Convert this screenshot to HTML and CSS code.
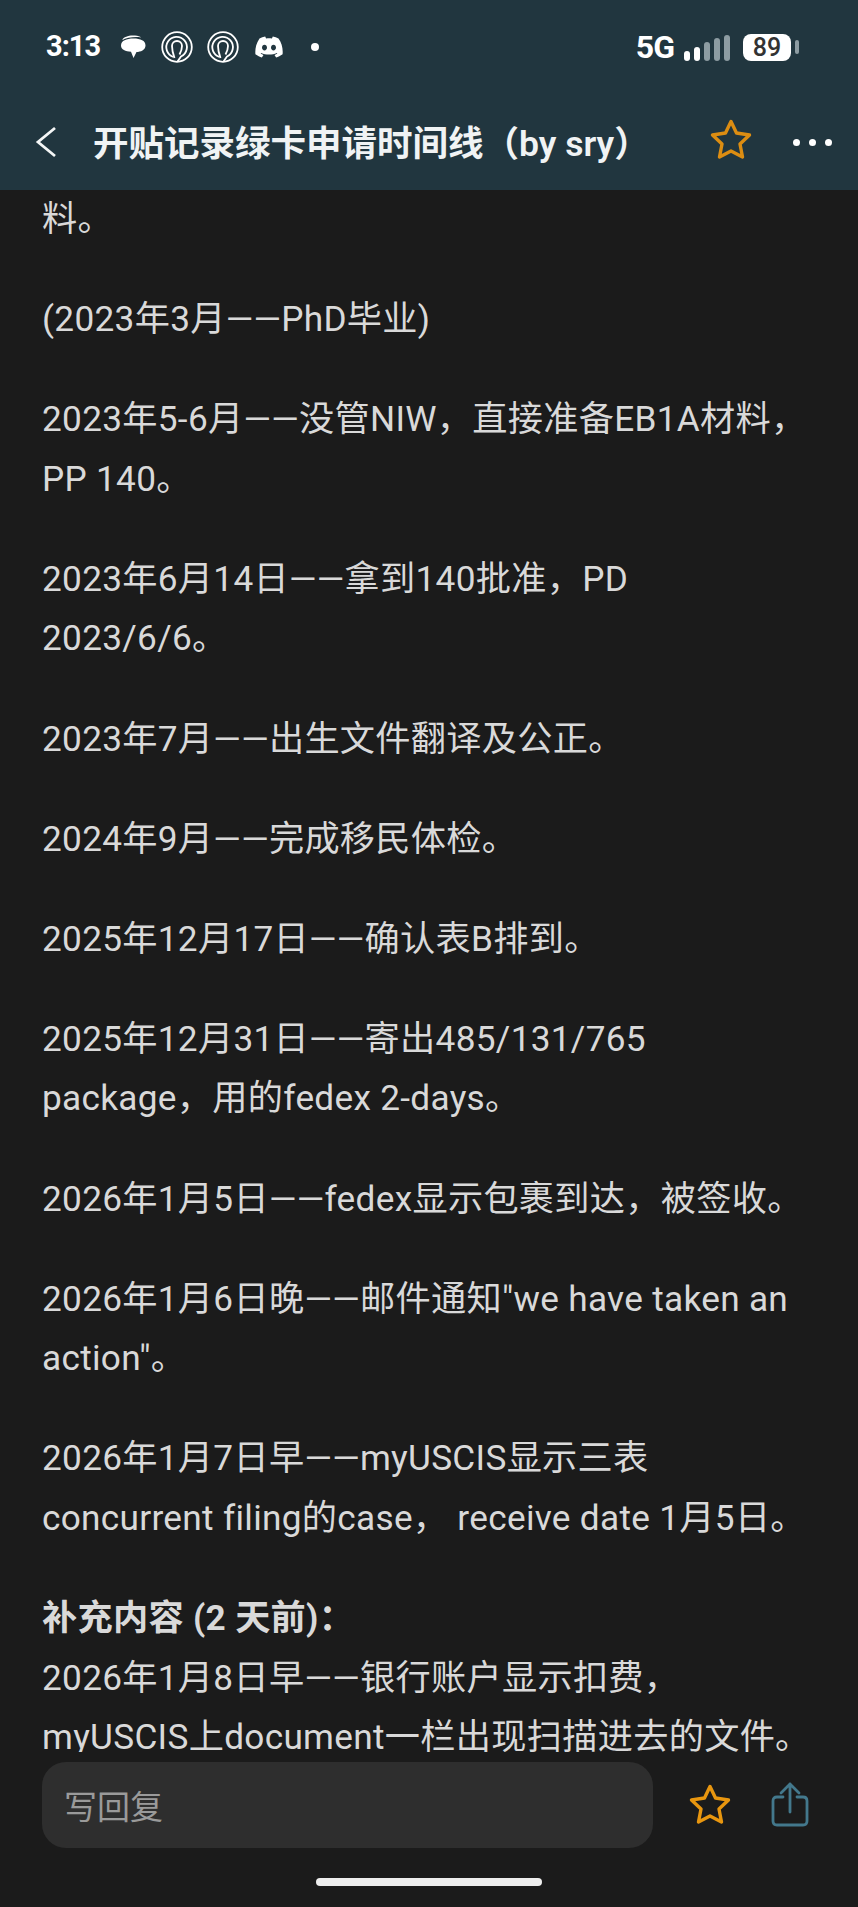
FILE: index.html
```html
<!DOCTYPE html>
<html lang="zh-CN">
<head>
  <meta charset="UTF-8" />
  <meta name="viewport" content="width=device-width, initial-scale=1.0" />
  <title>开贴记录绿卡申请时间线</title>
  <link rel="stylesheet" href="styles.css">
</head>
<body>
  <div class="screen">
    <header class="topbar">
      <div class="status-bar">
        <div class="status-left">
          <span class="clock">3:13</span>
          <svg class="note-bubble" width="26" height="26" viewBox="0 0 26 26">
            <path d="M2 6 C4 2.500 9 1 15 1.500 C18 1.700 20 2.500 21 3.500 C15 2.500 7 3.500 2 6Z" fill="#fff"/>
            <path d="M1 11.500 C1 6.500 6.500 4.500 13.500 4.500 C20.500 4.500 25.500 6.500 25.500 11.500 C25.500 16 20.500 18 16.500 18 L13.500 24 L11 17.800 C5.500 17.500 1 15.500 1 11.500Z" fill="#fff"/>
          </svg>
          <svg class="note-ring" width="32" height="32" viewBox="0 0 32 32" fill="none" stroke="#fff" stroke-width="1.800">
            <circle cx="16" cy="16" r="14.800"/>
            <path d="M12.500 26 A10.300 10.300 0 1 1 20 25.500 L16.500 30.500"/>
            <path d="M13.500 27 Q11 20 11 15 A5 5 0 0 1 21 15 Q21 19 18.500 23.500"/>
          </svg>
          <svg class="note-ring" width="32" height="32" viewBox="0 0 32 32" fill="none" stroke="#fff" stroke-width="1.800">
            <circle cx="16" cy="16" r="14.800"/>
            <path d="M12.500 26 A10.300 10.300 0 1 1 20 25.500 L16.500 30.500"/>
            <path d="M13.500 27 Q11 20 11 15 A5 5 0 0 1 21 15 Q21 19 18.500 23.500"/>
          </svg>
          <svg class="note-discord" width="28" height="22" viewBox="0 0 28 22">
            <path fill="#fff" fill-rule="evenodd" d="M23.500 2.500 C21.700 1.600 19.800 1 17.800 0.600 L16.900 2.400 C14.900 2.100 13 2.100 11.100 2.400 L10.200 0.600 C8.200 1 6.300 1.600 4.500 2.500 C0.900 7.900 0 13.100 0.400 18.300 C2.600 19.900 4.800 20.900 6.900 21.500 L8.500 19 C7.400 18.600 6.500 18.100 5.600 17.500 L6.200 17 C10.500 19 17.500 19 21.800 17 L22.400 17.500 C21.500 18.100 20.600 18.600 19.500 19 L21.100 21.500 C23.200 20.900 25.400 19.900 27.600 18.300 C28.100 12.300 26.800 7.100 23.500 2.500Z M9.500 14.500 C8.100 14.500 7 13.200 7 11.600 C7 10 8.100 8.700 9.500 8.700 C10.900 8.700 12 10 12 11.600 C12 13.200 10.900 14.500 9.500 14.500Z M18.500 14.500 C17.100 14.500 16 13.200 16 11.600 C16 10 17.100 8.700 18.500 8.700 C19.900 8.700 21 10 21 11.600 C21 13.200 19.900 14.500 18.500 14.500Z"/>
          </svg>
          <span class="dot"></span>
        </div>
        <div class="status-right">
          <span class="network">5G</span>
          <div class="signal">
            <i class="bar bar-1"></i>
            <i class="bar bar-2"></i>
            <i class="bar bar-3"></i>
            <i class="bar bar-4"></i>
            <i class="bar bar-5"></i>
          </div>
          <div class="battery">
            <span class="battery-body">89</span>
            <span class="battery-tip"></span>
          </div>
        </div>
      </div>
      <nav class="nav-bar">
        <svg class="back-icon" width="24" height="34" viewBox="0 0 24 34" fill="none" stroke="#f4f6f6" stroke-width="2.800">
          <path d="M21 3 L4 17 L21 31"/>
        </svg>
        <h1 class="title">开贴记录绿卡申请时间线（by sry）</h1>
        <svg class="star-icon" width="42" height="42" viewBox="0 0 42 42" fill="none" stroke="#dc8d12" stroke-width="3.400" stroke-linejoin="round">
          <path d="M21 2.500 L26.500 14 L39.500 16 L30 25 L32.500 38 L21 32 L9.500 38 L12 25 L2.500 16 L15.500 14Z"/>
        </svg>
        <div class="more">
          <span></span><span></span><span></span>
        </div>
      </nav>
    </header>

    <main class="post">
      <p>料。</p>
      <p>(2023年3月——PhD毕业)</p>
      <p>2023年5-6月——没管NIW，直接准备EB1A材料，PP 140。</p>
      <p>2023年6月14日——拿到140批准，PD 2023/6/6。</p>
      <p>2023年7月——出生文件翻译及公正。</p>
      <p>2024年9月——完成移民体检。</p>
      <p>2025年12月17日——确认表B排到。</p>
      <p>2025年12月31日——寄出485/131/765 package，用的fedex 2-days。</p>
      <p>2026年1月5日——fedex显示包裹到达，被签收。</p>
      <p>2026年1月6日晚——邮件通知"we have taken an action"。</p>
      <p>2026年1月7日早——myUSCIS显示三表concurrent filing的case， receive date 1月5日。</p>
      <p><strong>补充内容 (2 天前)：</strong><br>2026年1月8日早——银行账户显示扣费，myUSCIS上document一栏出现扫描进去的文件。</p>
    </main>

    <footer class="reply-bar">
      <div class="reply-row">
        <div class="reply-input">写回复</div>
        <svg class="star-icon" width="42" height="42" viewBox="0 0 42 42" fill="none" stroke="#e8960f" stroke-width="3.400" stroke-linejoin="round">
          <path d="M21 2.500 L26.500 14 L39.500 16 L30 25 L32.500 38 L21 32 L9.500 38 L12 25 L2.500 16 L15.500 14Z"/>
        </svg>
        <svg class="share-icon" width="38" height="46" viewBox="0 0 38 46" fill="none" stroke="#43788c" stroke-width="2.800" stroke-linecap="round" stroke-linejoin="round">
          <path d="M12 15 H6 Q2 15 2 19 V39 Q2 43 6 43 H32 Q36 43 36 39 V19 Q36 15 32 15 H26"/>
          <path d="M19 30 V2 M10 11 L19 2 L28 11"/>
        </svg>
      </div>
      <div class="home-line"></div>
    </footer>
  </div>
</body>
</html>
```

FILE: styles.css
```css
/* Dark thread view on a phone screen */
body {
  margin: 0;
  background-color: #1b1b1b;
  font-family: Roboto, "Noto Sans CJK SC", sans-serif;
}

.screen {
  height: 1907px;
  display: flex;
  flex-direction: column;
  overflow: hidden;
}

.topbar {
  height: 190px;
  flex-shrink: 0;
  background-color: #21363f;
  color: #fff;
}

.status-bar {
  height: 94px;
  display: flex;
  justify-content: space-between;
  align-items: center;
  padding: 0 59px 0 46px;
}

.status-left,
.status-right {
  display: flex;
  align-items: center;
}

.clock {
  font-size: 29px;
  font-weight: 700;
  letter-spacing: -1px;
  margin: -2px 20px 0 0;
}

.note-bubble {
  margin-right: 15px;
}

.note-ring {
  margin-right: 14px;
}

.note-ring + .note-discord {
  margin-left: 2px;
}

.dot {
  width: 8px;
  height: 8px;
  border-radius: 50%;
  background-color: #fff;
  margin-left: 28px;
}

.network {
  font-size: 32px;
  font-weight: 700;
  letter-spacing: -1px;
  margin-right: 10px;
}

.signal {
  display: flex;
  align-items: flex-end;
  gap: 4px;
  margin-right: 13px;
  padding-top: 1px;
}

.bar {
  width: 6px;
  border-radius: 3px;
  background-color: #8d9ca2;
}

.bar-1 { height: 10px; background-color: #fff; }
.bar-2 { height: 14px; background-color: #fff; }
.bar-3 { height: 19px; }
.bar-4 { height: 23px; }
.bar-5 { height: 26px; }

.battery {
  display: flex;
  align-items: center;
  gap: 4px;
}

.battery-body {
  width: 48px;
  height: 27px;
  border-radius: 8px;
  background-color: #fff;
  color: #333;
  font-size: 25px;
  font-weight: 500;
  line-height: 27px;
  text-align: center;
}

.battery-tip {
  width: 4px;
  height: 14px;
  border-radius: 2px;
  background-color: #8d9ca2;
}

.nav-bar {
  height: 96px;
  display: flex;
  align-items: center;
  padding: 0 26px 0 34px;
}

.title {
  flex: 1;
  margin: -3px 0 0 35px;
  font-size: 35.5px;
  font-weight: 600;
  color: #f0f3f4;
  white-space: nowrap;
}

.nav-bar .star-icon {
  margin-top: -4px;
}

.more {
  display: flex;
  gap: 9px;
  margin-left: 41px;
}

.more span {
  width: 7px;
  height: 7px;
  border-radius: 50%;
  background-color: #fff;
}

.post {
  flex: 1;
  min-height: 0;
  overflow: hidden;
  padding: 0 42px;
  color: #d9d9d9;
  font-size: 35.2px;
  letter-spacing: 0.3px;
  line-height: 59.6px;
}

.post p {
  margin: 0 0 40.5px;
}

.post strong {
  font-weight: 700;
}

.reply-bar {
  height: 155px;
  flex-shrink: 0;
  padding-top: 10px;
  box-sizing: border-box;
}

.reply-row {
  display: flex;
  align-items: center;
  padding-left: 42px;
}

.reply-input {
  width: 611px;
  height: 86px;
  border-radius: 24px;
  background-color: #2e2e2e;
  color: #9a9a9a;
  font-size: 33px;
  line-height: 86px;
  padding: 3px 0 0 22px;
  box-sizing: border-box;
}

.reply-row .star-icon {
  margin-left: 36px;
}

.share-icon {
  margin-left: 40px;
}

.home-line {
  width: 226px;
  height: 8px;
  border-radius: 4px;
  background-color: #eee;
  margin: 30px auto 0;
}
```
